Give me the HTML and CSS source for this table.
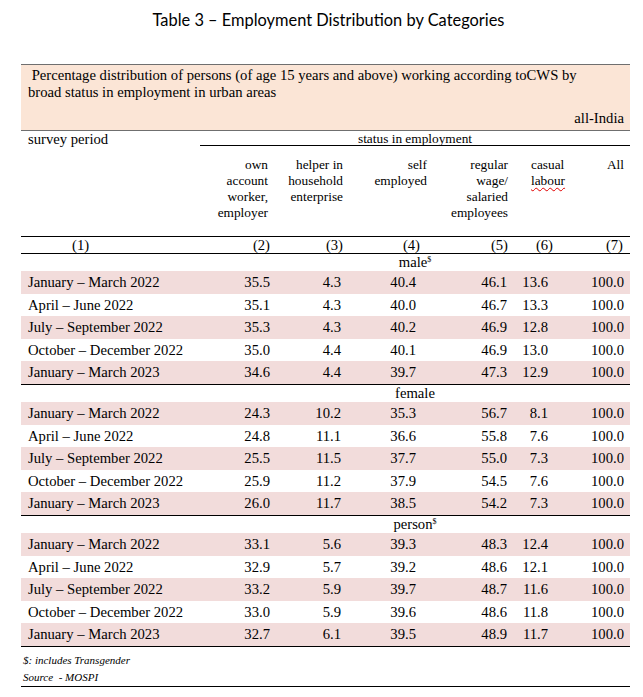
FILE: index.html
```html
<!DOCTYPE html>
<html lang="en">
<head>
<meta charset="utf-8">
<title>Table 3 – Employment Distribution by Categories</title>
<link rel="stylesheet" href="styles.css">
</head>
<body>
<main class="page">
  <h1 class="title">Table 3 – Employment Distribution by Categories</h1>
  <section class="report">
    <div class="caption">
      <p class="caption-text">&nbsp;Percentage distribution of persons (of age 15 years and above) working according toCWS by<br>broad status in employment in urban areas</p>
      <p class="caption-region">all-India</p>
    </div>

    <div class="sheet">
      <div class="row row-head">
        <div class="cell period">survey period</div>
        <div class="cell status">status in employment</div>
      </div>
      <div class="row row-cols">
        <div class="cell"></div>
        <div class="cell">own<br>account<br>worker,<br>employer</div>
        <div class="cell">helper in<br>household<br>enterprise</div>
        <div class="cell">self<br>employed</div>
        <div class="cell">regular<br>wage/<br>salaried<br>employees</div>
        <div class="cell">casual<br><span class="spell">labour</span></div>
        <div class="cell">All</div>
      </div>
      <div class="row row-index">
        <div class="cell">(1)</div>
        <div class="cell">(2)</div>
        <div class="cell">(3)</div>
        <div class="cell">(4)</div>
        <div class="cell">(5)</div>
        <div class="cell">(6)</div>
        <div class="cell">(7)</div>
      </div>

      <div class="group">
        <div class="row row-sub"><div class="cell label">male<sup>$</sup></div></div>
        <div class="row row-data shade"><div class="cell">January – March 2022</div><div class="cell">35.5</div><div class="cell">4.3</div><div class="cell">40.4</div><div class="cell">46.1</div><div class="cell">13.6</div><div class="cell">100.0</div></div>
        <div class="row row-data"><div class="cell">April – June 2022</div><div class="cell">35.1</div><div class="cell">4.3</div><div class="cell">40.0</div><div class="cell">46.7</div><div class="cell">13.3</div><div class="cell">100.0</div></div>
        <div class="row row-data shade"><div class="cell">July – September 2022</div><div class="cell">35.3</div><div class="cell">4.3</div><div class="cell">40.2</div><div class="cell">46.9</div><div class="cell">12.8</div><div class="cell">100.0</div></div>
        <div class="row row-data"><div class="cell">October – December 2022</div><div class="cell">35.0</div><div class="cell">4.4</div><div class="cell">40.1</div><div class="cell">46.9</div><div class="cell">13.0</div><div class="cell">100.0</div></div>
        <div class="row row-data shade"><div class="cell">January – March 2023</div><div class="cell">34.6</div><div class="cell">4.4</div><div class="cell">39.7</div><div class="cell">47.3</div><div class="cell">12.9</div><div class="cell">100.0</div></div>
      </div>

      <div class="group">
        <div class="row row-sub"><div class="cell label">female</div></div>
        <div class="row row-data shade"><div class="cell">January – March 2022</div><div class="cell">24.3</div><div class="cell">10.2</div><div class="cell">35.3</div><div class="cell">56.7</div><div class="cell">8.1</div><div class="cell">100.0</div></div>
        <div class="row row-data"><div class="cell">April – June 2022</div><div class="cell">24.8</div><div class="cell">11.1</div><div class="cell">36.6</div><div class="cell">55.8</div><div class="cell">7.6</div><div class="cell">100.0</div></div>
        <div class="row row-data shade"><div class="cell">July – September 2022</div><div class="cell">25.5</div><div class="cell">11.5</div><div class="cell">37.7</div><div class="cell">55.0</div><div class="cell">7.3</div><div class="cell">100.0</div></div>
        <div class="row row-data"><div class="cell">October – December 2022</div><div class="cell">25.9</div><div class="cell">11.2</div><div class="cell">37.9</div><div class="cell">54.5</div><div class="cell">7.6</div><div class="cell">100.0</div></div>
        <div class="row row-data shade"><div class="cell">January – March 2023</div><div class="cell">26.0</div><div class="cell">11.7</div><div class="cell">38.5</div><div class="cell">54.2</div><div class="cell">7.3</div><div class="cell">100.0</div></div>
      </div>

      <div class="group">
        <div class="row row-sub"><div class="cell label">person<sup>$</sup></div></div>
        <div class="row row-data shade"><div class="cell">January – March 2022</div><div class="cell">33.1</div><div class="cell">5.6</div><div class="cell">39.3</div><div class="cell">48.3</div><div class="cell">12.4</div><div class="cell">100.0</div></div>
        <div class="row row-data"><div class="cell">April – June 2022</div><div class="cell">32.9</div><div class="cell">5.7</div><div class="cell">39.2</div><div class="cell">48.6</div><div class="cell">12.1</div><div class="cell">100.0</div></div>
        <div class="row row-data shade"><div class="cell">July – September 2022</div><div class="cell">33.2</div><div class="cell">5.9</div><div class="cell">39.7</div><div class="cell">48.7</div><div class="cell">11.6</div><div class="cell">100.0</div></div>
        <div class="row row-data"><div class="cell">October – December 2022</div><div class="cell">33.0</div><div class="cell">5.9</div><div class="cell">39.6</div><div class="cell">48.6</div><div class="cell">11.8</div><div class="cell">100.0</div></div>
        <div class="row row-data shade"><div class="cell">January – March 2023</div><div class="cell">32.7</div><div class="cell">6.1</div><div class="cell">39.5</div><div class="cell">48.9</div><div class="cell">11.7</div><div class="cell">100.0</div></div>
      </div>
    </div>

    <div class="notes">
      <p>$: includes Transgender</p>
      <p>Source&nbsp; - MOSPI</p>
    </div>
  </section>
</main>
</body>
</html>
```

FILE: styles.css
```css
* { box-sizing: border-box; }

html, body {
  margin: 0;
  padding: 0;
  background: #ffffff;
}

body {
  font-family: "Liberation Serif", "Times New Roman", serif;
  color: #000000;
}

.page {
  padding-top: 11px;
}

.title {
  margin: 0 0 35px 0;
  height: 18px;
  font-family: Lato, "Open Sans", sans-serif;
  font-weight: 400;
  font-size: 16.4px;
  line-height: 18px;
  text-align: center;
  padding-left: 14px;
}

.report {
  margin-left: 21px;
  width: 609px;
  border-bottom: 1px solid #000;
}

/* peach caption */
.caption {
  background: #fbe5d6;
  border-top: 1px solid #6f6f6f;
  border-bottom: 1px solid #6f6f6f;
  padding: 2px 6px 3px 7px;
  font-size: 14.67px;
  line-height: 17px;
}

.caption p { margin: 0; }

.caption-text { white-space: nowrap; }

.caption-region {
  margin-top: 9px !important;
  text-align: right;
}

/* grid rows */
.row {
  display: grid;
  grid-template-columns: 179px 73px 74px 81px 85px 60px 57px;
}

.cell { white-space: nowrap; }

.row-head {
  height: 15px;
  font-size: 13.33px;
  line-height: 12px;
}

.row-head .period {
  font-size: 14.67px;
  padding: 2px 0 0 7px;
}

.row-head .status {
  grid-column: 2 / 8;
  text-align: center;
  padding-top: 2px;
  border-bottom: 1px solid #000;
}

.row-cols {
  padding: 11px 0 15px 0;
  font-size: 13.33px;
  line-height: 16px;
}

.row-cols .cell { text-align: right; }
.row-cols .cell:nth-child(2) { padding-right: 5px; }
.row-cols .cell:nth-child(3) { padding-right: 4px; }
.row-cols .cell:nth-child(4) { padding-right: 1px; }
.row-cols .cell:nth-child(5) { padding-right: 5px; }
.row-cols .cell:nth-child(6) { text-align: left; padding-left: 18px; }
.row-cols .cell:nth-child(7) { padding-right: 6px; }

.spell {
  text-decoration: underline wavy #e00000;
  text-decoration-thickness: 1px;
  text-underline-offset: 2px;
}

.row-index {
  border-top: 1px solid #000;
  border-bottom: 1px solid #000;
  font-size: 14.67px;
  line-height: 16px;
}

.row-index .cell { text-align: right; }
.row-index .cell:nth-child(1) { text-align: left; padding-left: 51px; }
.row-index .cell:nth-child(2) { padding-right: 3px; }
.row-index .cell:nth-child(3) { padding-right: 4px; }
.row-index .cell:nth-child(4) { padding-right: 8px; }
.row-index .cell:nth-child(5) { padding-right: 5px; }
.row-index .cell:nth-child(6) { padding-right: 20px; }
.row-index .cell:nth-child(7) { padding-right: 7px; }

.group + .group { border-top: 1px solid #000; }

.row-sub {
  height: 17px;
  font-size: 14.67px;
  line-height: 17px;
}

.row-sub .label {
  grid-column: 2 / 8;
  text-align: center;
}

.row-sub sup {
  font-size: 8px;
  line-height: 0;
  vertical-align: 5px;
}

.row-data {
  height: 22.6px;
  font-size: 14.67px;
  line-height: 22.6px;
}

.row-data.shade { background: #f2dcdb; }

.row-data .cell { text-align: right; }
.row-data .cell:nth-child(1) { text-align: left; padding-left: 7px; }
.row-data .cell:nth-child(2) { padding-right: 3px; }
.row-data .cell:nth-child(3) { padding-right: 6px; }
.row-data .cell:nth-child(4) { padding-right: 12px; }
.row-data .cell:nth-child(5) { padding-right: 6px; }
.row-data .cell:nth-child(6) { padding-right: 25px; }
.row-data .cell:nth-child(7) { padding-right: 6px; }

.sheet { border-bottom: 1px solid #000; }

.notes {
  padding: 5px 0 0 2px;
  font-size: 11px;
  font-style: italic;
  line-height: 17px;
}

.notes p { margin: 0; }
```
